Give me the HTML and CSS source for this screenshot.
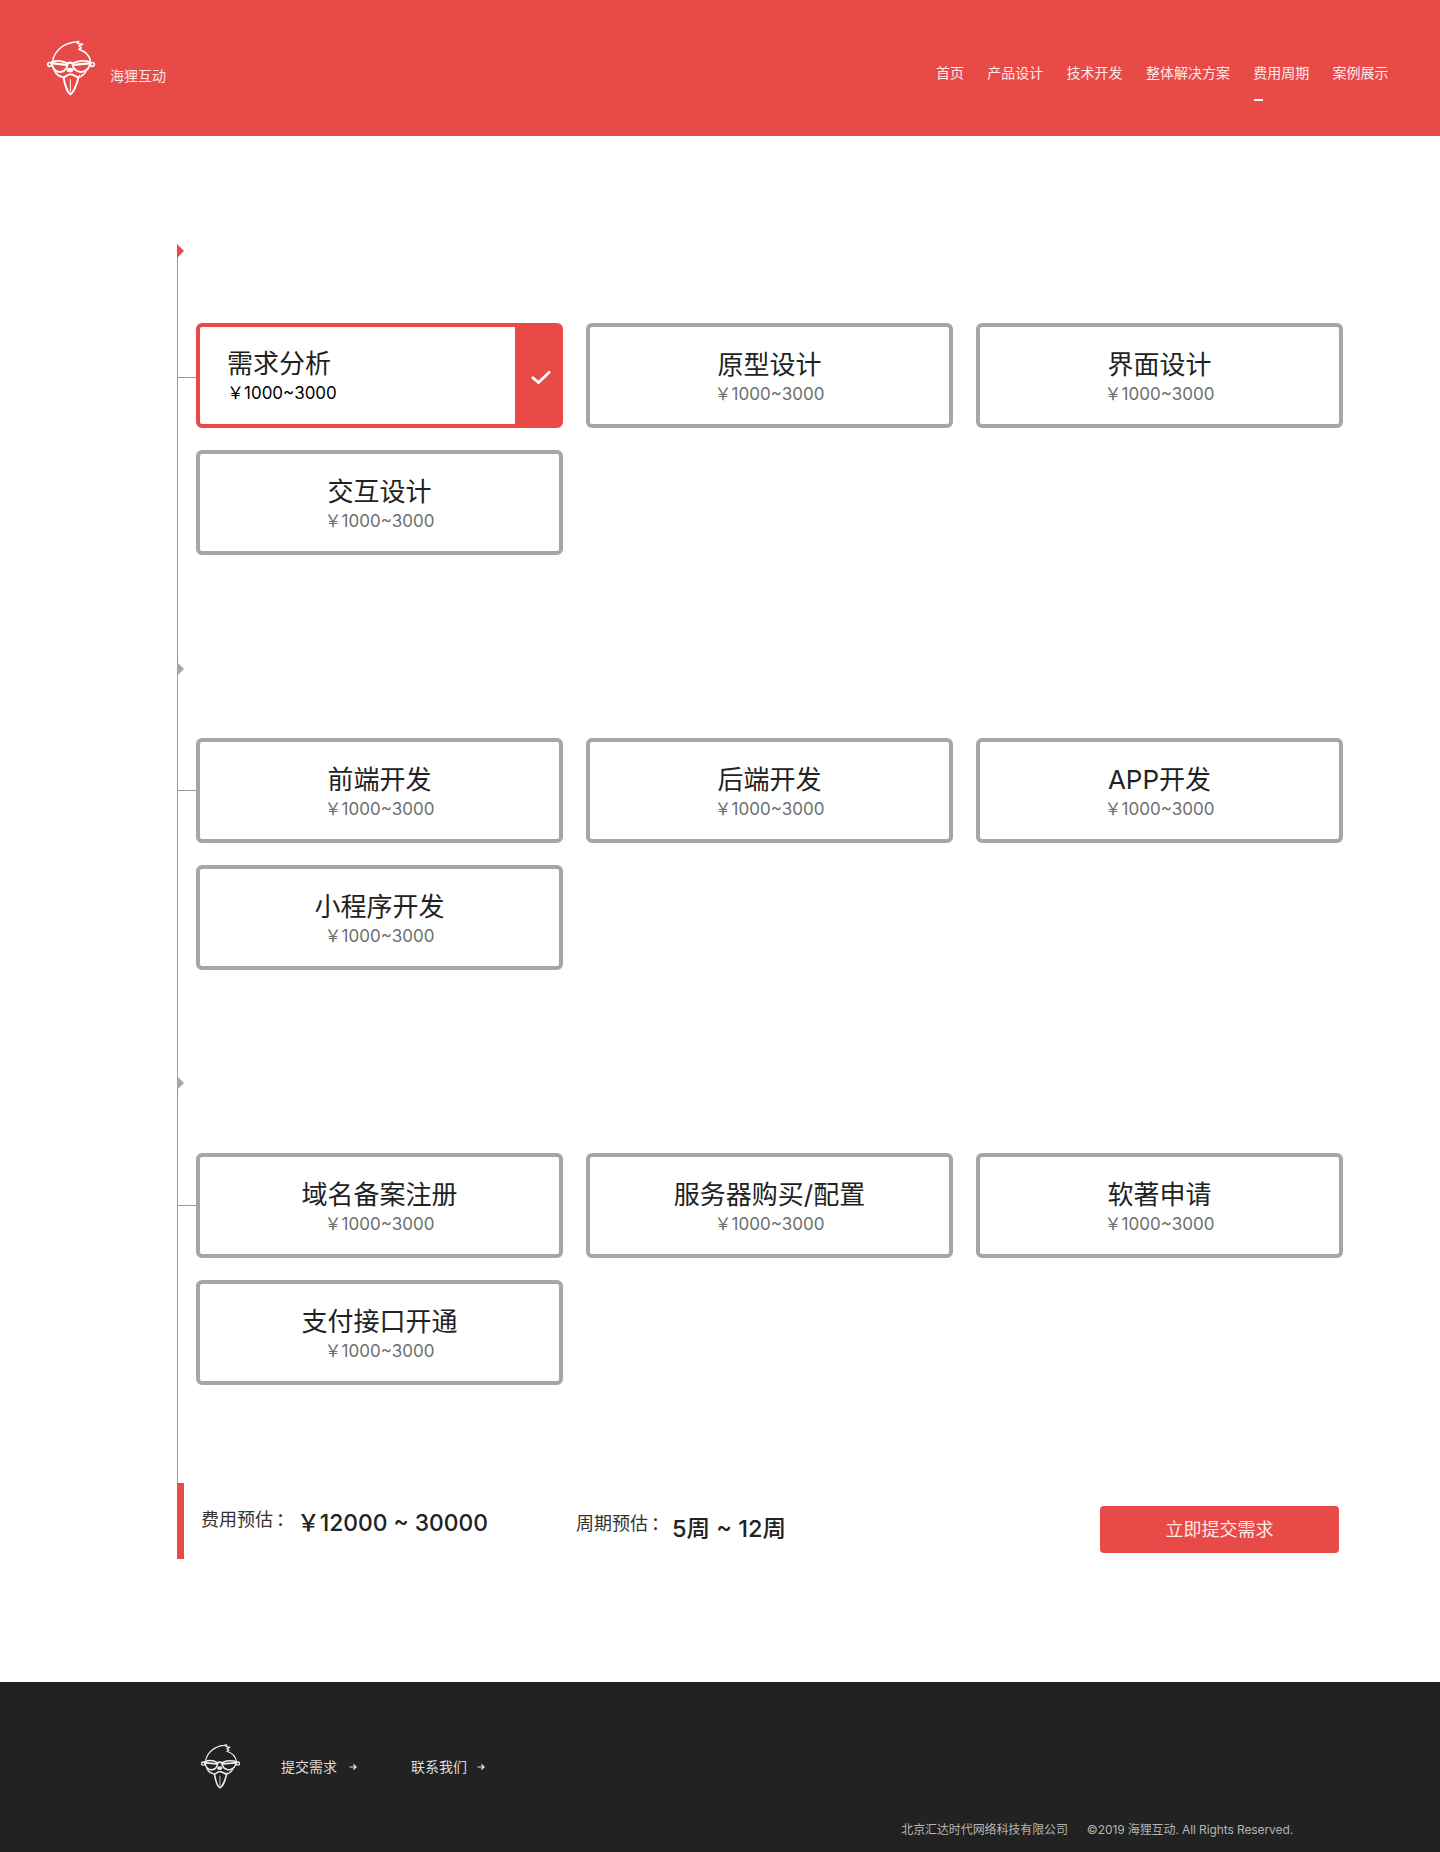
FILE: index.html
```html
<!DOCTYPE html>
<html lang="zh">
<head>
  <meta charset="utf-8">
  <title>海狸互动 - 费用周期</title>
  <link rel="stylesheet" href="styles.css">
</head>
<body>

<svg class="defs" width="0" height="0">
  <symbol id="beaver" viewBox="50 30 148 168">
    <g fill="none" stroke="currentColor" stroke-width="4.500" stroke-linejoin="round" stroke-linecap="round">
      <path d="M68 90C74 60 102 38 136 34L148 32L144 38L160 41L148 46L156 52L148 56C166 62 181 76 184 92"/>
      <path d="M64 96C80 89 100 92 113 100C113 120 100 128 86 126C73 124 66 110 64 96Z" stroke-width="6"/>
      <path d="M129 100C142 92 166 89 184 96C182 110 174 124 158 126C143 128 129 118 129 100Z" stroke-width="6"/>
      <path d="M113 100Q121 95 129 100M68 100L110 104M132 104L180 100" stroke-width="7"/>
      <circle cx="58" cy="103" r="6" stroke-width="5"/>
      <circle cx="190" cy="103" r="6" stroke-width="5"/>
      <path d="M72 120C76 132 88 141 102 143M172 120C168 132 156 141 146 143"/>
      <path d="M101 143C105 166 114 191 122 195C131 191 142 166 147 143C136 140 128 132 122 134C116 132 108 140 101 143Z" stroke-width="6"/>
      <path d="M122 150V186" stroke-width="3"/>
    </g>
    <ellipse cx="121" cy="120" rx="10" ry="7" fill="currentColor"/>
    <g fill="currentColor">
      <circle cx="84" cy="134" r="2"/><circle cx="92" cy="137" r="2"/><circle cx="79" cy="129" r="2"/>
      <circle cx="158" cy="134" r="2"/><circle cx="150" cy="137" r="2"/><circle cx="165" cy="129" r="2"/>
    </g>
  </symbol>
  <symbol id="arrow" viewBox="0 0 8 8">
    <path d="M0.500 4H7M4.500 1.500L7 4L4.500 6.500" fill="none" stroke="currentColor" stroke-width="1.200"/>
  </symbol>
</svg>

<div class="header">
  <div class="brand">
    <svg class="brand-logo"><use href="#beaver"/></svg>
    <span class="brand-name">海狸互动</span>
  </div>
  <div class="nav">
    <a>首页</a>
    <a>产品设计</a>
    <a>技术开发</a>
    <a>整体解决方案</a>
    <a class="active">费用周期</a>
    <a>案例展示</a>
  </div>
</div>

<div class="main">
  <div class="timeline">

    <div class="group current">
      <div class="cards">
        <div class="card selected">
          <div class="card-body">
            <div class="card-title">需求分析</div>
            <div class="card-price">￥1000~3000</div>
          </div>
          <div class="card-check">
            <svg width="20" height="14" viewBox="0 0 20 14"><path d="M1 7L7.500 12.500L19 1.500" fill="none" stroke="#fff" stroke-width="2.800"/></svg>
          </div>
        </div>
        <div class="card"><div class="card-body"><div class="card-title">原型设计</div><div class="card-price">￥1000~3000</div></div></div>
        <div class="card"><div class="card-body"><div class="card-title">界面设计</div><div class="card-price">￥1000~3000</div></div></div>
        <div class="card"><div class="card-body"><div class="card-title">交互设计</div><div class="card-price">￥1000~3000</div></div></div>
      </div>
    </div>

    <div class="group">
      <div class="cards">
        <div class="card"><div class="card-body"><div class="card-title">前端开发</div><div class="card-price">￥1000~3000</div></div></div>
        <div class="card"><div class="card-body"><div class="card-title">后端开发</div><div class="card-price">￥1000~3000</div></div></div>
        <div class="card"><div class="card-body"><div class="card-title">APP开发</div><div class="card-price">￥1000~3000</div></div></div>
        <div class="card"><div class="card-body"><div class="card-title">小程序开发</div><div class="card-price">￥1000~3000</div></div></div>
      </div>
    </div>

    <div class="group">
      <div class="cards">
        <div class="card"><div class="card-body"><div class="card-title">域名备案注册</div><div class="card-price">￥1000~3000</div></div></div>
        <div class="card"><div class="card-body"><div class="card-title">服务器购买/配置</div><div class="card-price">￥1000~3000</div></div></div>
        <div class="card"><div class="card-body"><div class="card-title">软著申请</div><div class="card-price">￥1000~3000</div></div></div>
        <div class="card"><div class="card-body"><div class="card-title">支付接口开通</div><div class="card-price">￥1000~3000</div></div></div>
      </div>
    </div>

  </div>

  <div class="summary">
    <div class="estimate cost">
      <span class="estimate-label">费用预估<span class="colon">：</span></span>
      <span class="estimate-value">￥12000 ~ 30000</span>
    </div>
    <div class="estimate period">
      <span class="estimate-label">周期预估<span class="colon">：</span></span>
      <span class="estimate-value">5周 ~ 12周</span>
    </div>
    <a class="submit">立即提交需求</a>
  </div>
</div>

<div class="footer">
  <div class="footer-top">
    <svg class="footer-logo"><use href="#beaver"/></svg>
    <a class="footer-link">提交需求<svg class="footer-arrow"><use href="#arrow"/></svg></a>
    <a class="footer-link">联系我们<svg class="footer-arrow"><use href="#arrow"/></svg></a>
  </div>
  <div class="footer-bottom">
    <span>北京汇达时代网络科技有限公司</span>
    <span>©2019 海狸互动. All Rights Reserved.</span>
  </div>
</div>

</body>
</html>
```

FILE: styles.css
```css
body {
  margin: 0;
  background: #fff;
  color: #222;
  font-family: Inter, "Noto Sans CJK SC", sans-serif;
}
.defs {
  position: absolute;
}

.header {
  display: flex;
  justify-content: space-between;
  height: 136px;
  padding: 0 51.5px 0 47px;
  background: #e84a48;
  color: #fff;
}
.brand {
  display: flex;
  align-items: flex-start;
  padding-top: 40px;
}
.brand-logo {
  width: 48px;
  height: 56px;
}
.brand-name {
  margin: 26px 0 0 15px;
  font-size: 14px;
  line-height: 20px;
  color: #fbe4e3;
}
.nav {
  display: flex;
  gap: 23.3px;
  padding-top: 63px;
  font-size: 14px;
  line-height: 20px;
  color: #fde9e8;
}
.nav a {
  position: relative;
}
.nav .active:after {
  content: "";
  position: absolute;
  left: 1px;
  top: 36px;
  width: 9px;
  height: 2px;
  background: #fff;
}

.main {
  padding: 108px 0 123px 177px;
}
.timeline {
  border-left: 1px solid #999;
  padding-left: 18px;
}
.group {
  position: relative;
  padding: 79px 0 104px;
}
.group:last-child {
  padding-bottom: 98px;
}
.group:before {
  content: "";
  position: absolute;
  left: -19px;
  top: 3px;
  border-left: 7px solid #a6a6a6;
  border-top: 7px solid transparent;
  border-bottom: 7px solid transparent;
}
.group:last-child:before {
  top: 2px;
}
.group.current:before {
  top: 0;
  border-left-color: #e84a48;
}
.group:after {
  content: "";
  position: absolute;
  left: -18px;
  top: 131px;
  width: 18px;
  height: 1px;
  background: #999;
}
.group.current:after {
  top: 133px;
}

.cards {
  display: grid;
  grid-template-columns: repeat(3, 367px);
  column-gap: 23px;
  row-gap: 22px;
}
.card {
  display: flex;
  box-sizing: border-box;
  height: 105px;
  border: 4px solid #a6a6a6;
  border-radius: 6px;
}
.card-body {
  flex: 1;
  display: flex;
  flex-direction: column;
  justify-content: center;
  padding-top: 5px;
  text-align: center;
}
.card-title {
  font-size: 26px;
  line-height: 32px;
  color: #222;
}
.card-price {
  font-size: 17px;
  line-height: 26px;
  color: #6e6e6e;
}
.card.selected {
  border-color: #e84a48;
}
.card.selected .card-body {
  padding: 3px 0 0 27px;
  text-align: left;
}
.card.selected .card-price {
  color: #000;
}
.card-check {
  display: flex;
  align-items: center;
  justify-content: center;
  width: 44px;
  padding: 2px 0 0 8px;
  box-sizing: border-box;
  background: #e84a48;
}

.summary {
  display: flex;
  box-sizing: border-box;
  height: 76px;
  border-left: 7px solid #e84a48;
  padding-left: 17px;
}
.estimate {
  display: flex;
}
.estimate-label {
  font-size: 18px;
  white-space: nowrap;
  color: #333;
}
.colon {
  margin-left: 3px;
  font-family: "Noto Sans CJK TC", sans-serif;
}
.estimate-value {
  color: #222;
}
.cost {
  width: 375px;
  padding-top: 25px;
}
.cost .estimate-label {
  width: 96px;
  margin-top: -2px;
  line-height: 24px;
}
.cost .estimate-value {
  font-size: 22.8px;
  line-height: 30px;
  font-weight: 500;
}
.period {
  width: 524px;
  padding-top: 29px;
}
.period .estimate-label {
  width: 96px;
  margin-top: -2px;
  line-height: 24px;
}
.period .estimate-value {
  font-size: 23.5px;
  line-height: 34px;
  font-weight: 500;
}
.submit {
  align-self: flex-start;
  box-sizing: border-box;
  width: 239px;
  height: 47px;
  margin-top: 23px;
  border-radius: 4px;
  background: #e84a48;
  color: #fde9e8;
  font-size: 18px;
  line-height: 47px;
  text-align: center;
}

.footer {
  box-sizing: border-box;
  height: 170px;
  padding: 61px 147px 0 201px;
  background: #222;
  color: #ddd;
}
.footer-top {
  display: flex;
  align-items: center;
}
.footer-logo {
  width: 39px;
  height: 47px;
  color: #eee;
}
.footer-link {
  display: flex;
  align-items: center;
  margin-left: 41px;
  font-size: 14px;
  line-height: 20px;
}
.footer-link + .footer-link {
  margin-left: 54px;
}
.footer-arrow {
  width: 8px;
  height: 8px;
  margin-left: 12px;
  color: #eee;
}
.footer-link + .footer-link .footer-arrow {
  margin-left: 10px;
}
.footer-bottom {
  display: flex;
  justify-content: flex-end;
  gap: 19px;
  margin-top: 31px;
  font-size: 12px;
  line-height: 18px;
  letter-spacing: -0.1px;
  color: #b4b4b4;
}
```
